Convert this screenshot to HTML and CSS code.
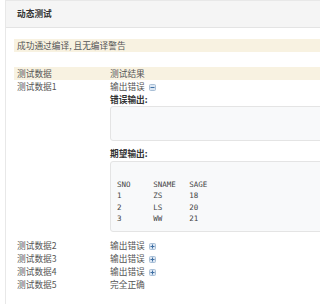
FILE: index.html
```html
<!DOCTYPE html>
<html lang="zh-CN">
<head>
<meta charset="utf-8">
<title>动态测试</title>
<link rel="stylesheet" href="styles.css">
</head>
<body>
<div class="panel">
  <div class="panel-head">动态测试</div>
  <div class="panel-body">
    <div class="alert">成功通过编译, 且无编译警告</div>
    <table class="results">
      <thead>
        <tr><th class="c1">测试数据</th><th>测试结果</th></tr>
      </thead>
      <tbody>
        <tr>
          <td class="c1">测试数据1</td>
          <td>输出错误 <svg class="tog" viewBox="0 0 7 7" width="7" height="7"><rect x="0.5" y="0.5" width="6" height="6" rx="1" fill="#dce7f3" stroke="#a9bfd6"/><rect x="1.5" y="3" width="4" height="1" fill="#3f6fa3"/></svg>
            <div class="detail">
              <div class="label">错误输出:</div>
              <div class="box box-err"></div>
              <div class="label label-gap">期望输出:</div>
              <pre class="box box-out">

SNO	SNAME	SAGE
1	ZS	18
2	LS	20
3	WW	21</pre>
            </div>
          </td>
        </tr>
        <tr><td class="c1">测试数据2</td><td>输出错误 <svg class="tog" viewBox="0 0 7 7" width="7" height="7"><rect x="0.5" y="0.5" width="6" height="6" rx="1" fill="#dce7f3" stroke="#a9bfd6"/><rect x="1.5" y="3" width="4" height="1" fill="#3f6fa3"/><rect x="3" y="1.5" width="1" height="4" fill="#3f6fa3"/></svg></td></tr>
        <tr><td class="c1">测试数据3</td><td>输出错误 <svg class="tog" viewBox="0 0 7 7" width="7" height="7"><rect x="0.5" y="0.5" width="6" height="6" rx="1" fill="#dce7f3" stroke="#a9bfd6"/><rect x="1.5" y="3" width="4" height="1" fill="#3f6fa3"/><rect x="3" y="1.5" width="1" height="4" fill="#3f6fa3"/></svg></td></tr>
        <tr><td class="c1">测试数据4</td><td>输出错误 <svg class="tog" viewBox="0 0 7 7" width="7" height="7"><rect x="0.5" y="0.5" width="6" height="6" rx="1" fill="#dce7f3" stroke="#a9bfd6"/><rect x="1.5" y="3" width="4" height="1" fill="#3f6fa3"/><rect x="3" y="1.5" width="1" height="4" fill="#3f6fa3"/></svg></td></tr>
        <tr><td class="c1">测试数据5</td><td>完全正确</td></tr>
      </tbody>
    </table>
  </div>
</div>
</body>
</html>
```
FILE: styles.css
```css
html, body {
  margin: 0;
  overflow: hidden;
  background: #fff;
}
body {
  font-family: "Noto Sans CJK SC", "Noto Sans", sans-serif;
  font-size: 8.7px;
  color: #555;
}
.panel {
  margin-left: 5px;
  border-left: 1px solid #e8e8e8;
  min-height: 304px;
}
.panel-head {
  height: 26px;
  line-height: 26px;
  background: #f5f5f5;
  border-top: 1px solid #e8e8e8;
  border-bottom: 1px solid #e4e4e4;
  padding-left: 11px;
  font-weight: bold;
  color: #333;
}
.panel-body {
  padding: 11px 0 0 8px;
}
.alert {
  background: #f8f2e1;
  line-height: 13px;
  padding: 0 3px;
}
.results {
  margin-top: 15px;
  border-collapse: collapse;
  width: 400px;
}
.results th, .results td {
  padding: 0 3px;
  line-height: 13px;
  text-align: left;
  font-weight: normal;
  vertical-align: top;
}
.results thead tr {
  background: #f8f2e1;
}
.results .c1 {
  width: 87px;
}
.tog {
  vertical-align: -1px;
  margin-left: 2px;
}
.label {
  font-weight: bold;
  color: #333;
}
.label-gap {
  margin-top: 6px;
}
.box {
  width: 260px;
  border: 1px solid #e4e4e4;
  border-radius: 3px;
  background: #f8f9fa;
  box-sizing: border-box;
}
.box-err {
  height: 35px;
}
.box-out {
  margin: 1px 0 7px;
  padding: 5px 6px 6px;
  font-family: "DejaVu Sans Mono", monospace;
  font-size: 7.5px;
  line-height: 11.6px;
  color: #444;
  tab-size: 8;
}
```
